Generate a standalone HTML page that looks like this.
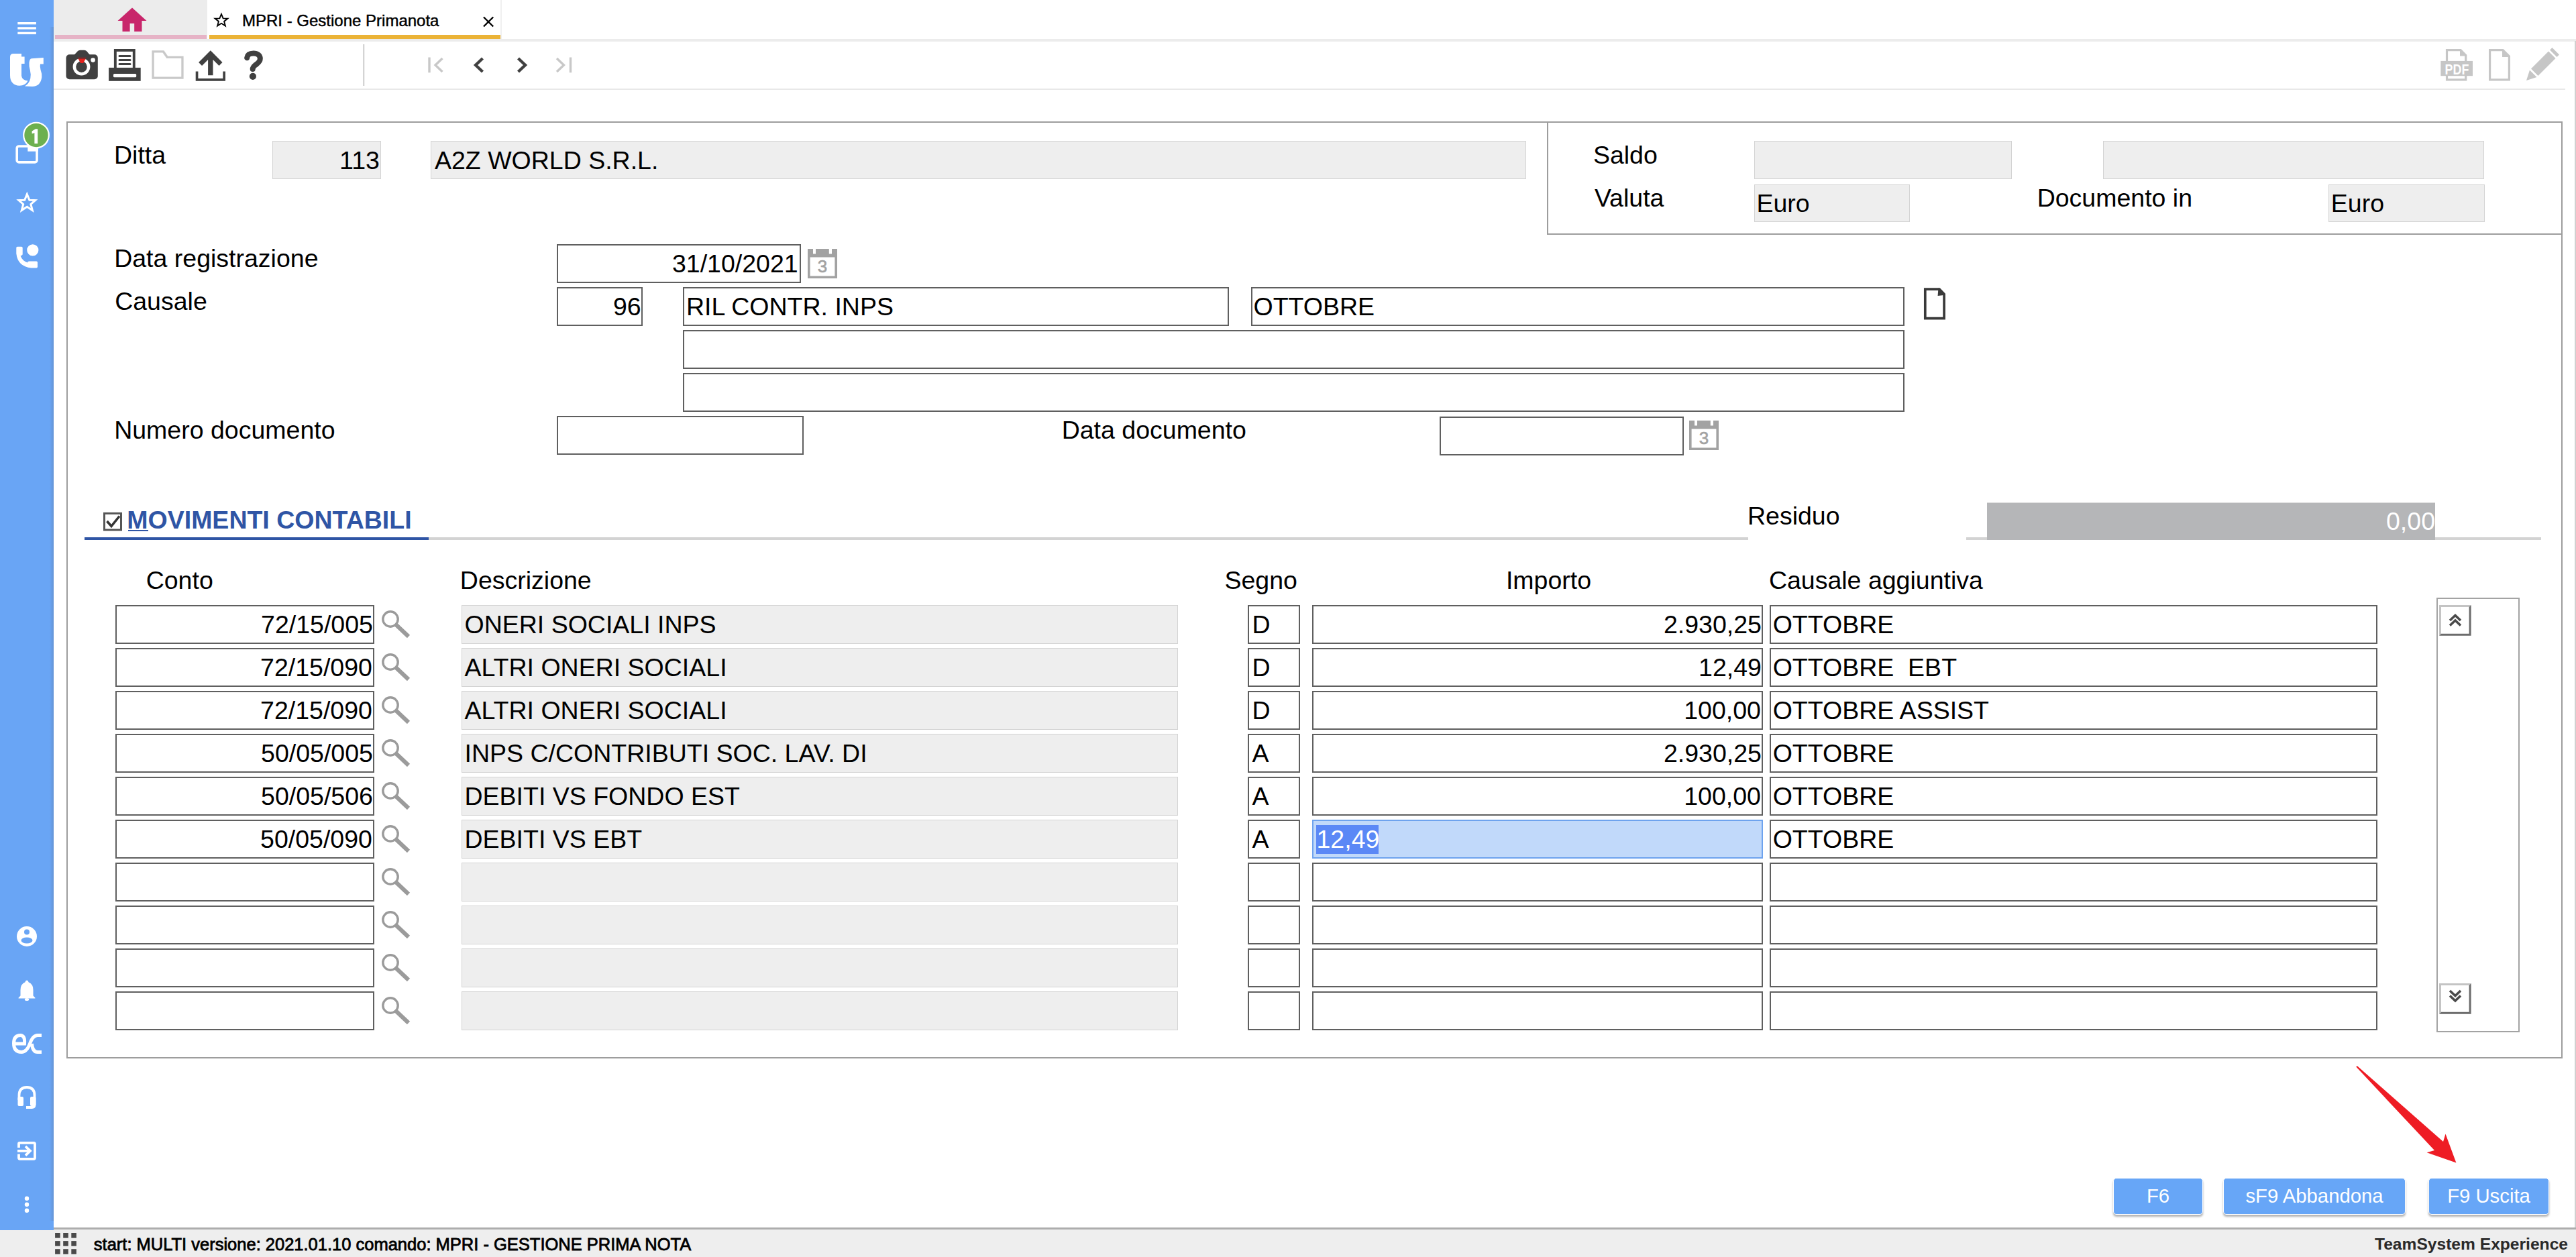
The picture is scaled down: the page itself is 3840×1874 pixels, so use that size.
<!DOCTYPE html><html><head><meta charset="utf-8"><style>
*{margin:0;padding:0;box-sizing:border-box}
html,body{width:3840px;height:1874px;overflow:hidden;background:#fff}
body{position:relative;font-family:"Liberation Sans",sans-serif;color:#000}
div,svg{position:absolute}
.t{font-size:37.5px;line-height:40px;white-space:pre}
.fd{border:2px solid #5f5f5f;background:#fff}
.fg{border:1.6px solid #d3d3d3;background:#eeeeee}
.sb{background:#69a5f5}
.btn{background:#67a6f7;border-radius:5px;border:1px solid #fff;box-shadow:0 3px 3px rgba(0,0,0,.3);color:#fff;font-size:29.3px;line-height:40px;text-align:center}
</style></head><body><div class="sb" style="left:0;top:0;width:80px;height:1834px"></div>
<div style="left:73.5px;top:40px;width:6.5px;height:1794px;background:linear-gradient(to right,rgba(70,90,120,0),rgba(90,110,140,.3))"></div>
<svg style="left:0;top:0" width="80" height="1834" viewBox="0 0 80 1834"><rect x="26.3" y="33" width="27.6" height="3.4" fill="#fff"/><rect x="26.3" y="40.3" width="27.6" height="3.4" fill="#fff"/><rect x="26.3" y="47.7" width="27.6" height="3.4" fill="#fff"/><path fill="#fff" d="M15,85 Q15,80 20,80 L32,80 L32,84.5 L36.6,84.5 L36.6,95 L32,95 L32,113 Q33,120 41.5,120.5 Q38,127.5 29,127.8 Q15,127 15,112 Z"/><path fill="#fff" d="M47,87.2 L64.8,86 L64.8,95.5 L60,95.5 Q59.2,99 60.5,104 Q62.8,110 62.3,115 Q60.5,128.8 48,129 L37,128.6 Q43.5,124.5 45.3,117 Q46.5,111 44.8,104.5 Q43,98 43.5,93.5 Q44,87.8 47,87.2 Z"/><rect x="25.2" y="218" width="29.8" height="23.9" rx="3" fill="none" stroke="#fff" stroke-width="3.6"/><rect x="41.3" y="216.2" width="15.5" height="9.5" fill="#fff"/><circle cx="54" cy="201.6" r="18.8" fill="#6db04f" stroke="#fff" stroke-width="2.2"/><path fill="#fff" d="M47.6,195.5 L53,192.2 L56.2,192.2 L56.2,214 L51.4,214 L51.4,198.2 L47.6,199.2 Z"/><path fill="none" stroke="#fff" stroke-width="3" stroke-linejoin="miter" d="M40.3,289.5 L43.9,298.2 L52.6,298.5 L45.9,304.5 L48.3,313.5 L40.3,308.3 L32.3,313.5 L34.7,304.5 L28,298.5 L36.7,298.2 Z"/><circle cx="48.8" cy="372.9" r="8.6" fill="#fff"/><path fill="#fff" d="M24.3,369.3 Q24.3,367.7 26,367.7 L32,367.7 Q33.7,367.7 33.7,369.4 L33.7,379 Q33.7,380.3 32.3,380.8 L30.6,381.4 Q33.3,388.8 41,391.4 L41.6,389.9 Q42,389.5 43.6,389.5 L54.3,389.5 Q56,389.5 56,391.2 L56,397.8 Q56,399.4 54.3,399.4 L46.5,399.4 Q26.5,397.5 24.3,378 Z"/><circle cx="40" cy="1396" r="15" fill="#fff"/><circle cx="40" cy="1389.6" r="4" fill="#69a5f5"/><ellipse cx="40" cy="1402" rx="8.5" ry="4.6" fill="#69a5f5"/><path fill="#fff" d="M40,1461.5 Q42.3,1461.8 42.5,1464.2 Q49.5,1467 49.5,1476 L49.5,1484.5 L52.4,1487.5 L52.4,1488.6 L27.6,1488.6 L27.6,1487.5 L30.5,1484.5 L30.5,1476 Q30.5,1467 37.5,1464.2 Q37.7,1461.8 40,1461.5 Z"/><ellipse cx="40" cy="1490" rx="3.2" ry="2" fill="#fff"/><path fill="none" stroke="#fff" stroke-width="5" stroke-linecap="butt" d="M23,1556 L36.5,1556 Q37.5,1543.5 30.5,1543.5 Q20.5,1543.5 20.5,1555.5 Q20.5,1568.5 32,1568.5 Q40,1568.5 44.5,1556 Q49,1543.5 56,1543.5 L62,1543.5 M62,1568.5 L56,1568.5 Q48.5,1568.5 47.5,1556"/><path fill="none" stroke="#fff" stroke-width="3.8" d="M28.5,1640 L28.5,1633 Q28.5,1621 40,1621 Q51.5,1621 51.5,1633 L51.5,1647 Q51.5,1651 47.5,1651 L39,1651"/><rect x="26.5" y="1635" width="8.5" height="14" rx="2" fill="#fff"/><rect x="45" y="1635" width="8.5" height="14" rx="2" fill="#fff"/><path fill="none" stroke="#fff" stroke-width="3.8" d="M28,1711 L28,1705 Q28,1703.8 29.5,1703.8 L50.3,1703.8 Q52,1703.8 52,1705.5 L52,1726 Q52,1727.8 50.3,1727.8 L29.5,1727.8 Q28,1727.8 28,1726 L28,1720.5"/><path fill="none" stroke="#fff" stroke-width="3.8" d="M26,1715.8 L45,1715.8 M38,1709 L45,1715.8 L38,1722.6"/><circle cx="40" cy="1786.8" r="3.2" fill="#fff"/><circle cx="40" cy="1795.8" r="3.2" fill="#fff"/><circle cx="40" cy="1804.8" r="3.2" fill="#fff"/></svg>
<div style="left:80px;top:58px;width:3760px;height:3.5px;background:#ececec"></div>
<div style="left:80px;top:0;width:229px;height:58px;background:#ececec"></div>
<div style="left:82px;top:52px;width:226px;height:6px;background:#e6b3c6"></div>
<div style="left:312px;top:52px;width:434px;height:6px;background:#ebb337"></div>
<div style="left:746px;top:0;width:2px;height:58px;background:#f0f0f0"></div>
<svg style="left:0;top:0" width="800" height="60" viewBox="0 0 800 60"><path fill="#c8266b" d="M197,11.5 L218.5,31 L211.5,31 L211.5,47 L200.2,47 L200.2,35 L193.6,35 L193.6,47 L182.5,47 L182.5,31 L175.5,31 Z"/><path fill="none" stroke="#000" stroke-width="1.9" stroke-linejoin="miter" d="M330,21 L332.6,27.4 L339.4,27.6 L334.1,31.9 L335.9,38.6 L330,34.8 L324.1,38.6 L325.9,31.9 L320.6,27.6 L327.4,27.4 Z"/><path fill="none" stroke="#000" stroke-width="2.4" d="M721,25.5 L735.2,39.5 M735.2,25.5 L721,39.5"/></svg>
<div style="left:361px;top:15.5px;font-size:24px;line-height:30px;white-space:pre;-webkit-text-stroke:0.45px #000">MPRI - Gestione Primanota</div>
<div style="left:80px;top:132px;width:3744px;height:2px;background:#e8e8e8"></div>
<div style="left:3838px;top:61px;width:2px;height:1769px;background:#d0d0d0"></div>
<div style="left:541.5px;top:66px;width:1.6px;height:62px;background:#8a8a8a"></div>
<svg style="left:0;top:60px" width="900" height="72" viewBox="0 60 900 72"><rect x="98.5" y="81.3" width="47.3" height="37" rx="5" fill="#404040"/><path fill="#404040" d="M110.5,82 L115.8,76.3 Q117,74.8 119.5,74.8 L125.5,74.8 Q128,74.8 129.2,76.3 L134,82 Z"/><circle cx="121.5" cy="99.6" r="10.6" fill="none" stroke="#fff" stroke-width="4.6"/><circle cx="138.6" cy="89.6" r="3.3" fill="#fff"/><path fill="#8a2a2a" d="M116,85.7 L128.3,85.7 L127.5,88.2 L116.8,88.2 Z"/><path fill="#e3231e" d="M116.8,88 L127.5,88 L124.2,94 L120,94 Z"/><rect x="171.85" y="74.95" width="27.9" height="30" fill="none" stroke="#404040" stroke-width="3.9"/><path stroke="#404040" stroke-width="3" stroke-linecap="round" d="M178,83.4 L194,83.4 M178,89.6 L194,89.6 M178,95.5 L194,95.5"/><rect x="162.1" y="100.9" width="47.6" height="19.9" fill="#404040"/><rect x="169" y="110" width="34.2" height="5.2" rx="1.5" fill="#fff"/><path fill="none" stroke="#c9c9c9" stroke-width="3.3" d="M228.05,76.95 L243.5,76.95 L249.2,85.3 L271.95,85.3 L271.95,116.05 L228.05,116.05 Z"/><path fill="#404040" d="M313.8,75.3 L331.5,93 L326.55,97.95 L317.5,88.9 L317.5,112.2 L310.1,112.2 L310.1,88.9 L301.05,97.95 L296.1,93 Z"/><path fill="none" stroke="#404040" stroke-width="3.7" d="M293.55,106.5 L293.55,118.85 L334.15,118.85 L334.15,106.5"/><path fill="none" stroke="#404040" stroke-width="8" stroke-linecap="round" d="M368.2,86.2 C369,80.8 372.8,79.6 377.8,79.6 C384,79.6 387.8,82.6 387.8,87.5 C387.8,92.6 383.3,94.8 380.3,97.3 C377.6,99.5 376.7,101.3 376.7,103"/><circle cx="376.9" cy="113.8" r="5.1" fill="#404040"/><path fill="none" stroke="#c8c8c8" stroke-width="3.4" d="M640,85.6 L640,108.3 M659.5,87 L649,97 L659.5,107"/><path fill="none" stroke="#404040" stroke-width="4.4" d="M719.5,87 L709,97 L719.5,107"/><path fill="none" stroke="#404040" stroke-width="4.4" d="M772.5,87 L783,97 L772.5,107"/><path fill="none" stroke="#c8c8c8" stroke-width="3.4" d="M830,87 L840.5,97 L830,107 M850.5,85.6 L850.5,108.3"/></svg>
<svg style="left:3600px;top:60px" width="240" height="72" viewBox="3600 60 240 72"><path fill="none" stroke="#c6c6c6" stroke-width="3.2" d="M3647.5,92 L3647.5,74.7 L3668,74.7 L3675.7,82.5 L3675.7,92 M3647.5,112 L3647.5,118.8 L3675.7,118.8 L3675.7,112"/><path fill="#c6c6c6" d="M3667,73.1 L3677.3,83.5 L3667,83.5 Z"/><rect x="3638.3" y="90.9" width="47.7" height="22.3" fill="#c6c6c6"/><text x="3644.6" y="110.6" font-family="Liberation Sans" font-weight="700" font-size="21.5" fill="#fff" textLength="35.7" lengthAdjust="spacingAndGlyphs">PDF</text><path fill="none" stroke="#c6c6c6" stroke-width="3.2" d="M3711.6,74.7 L3731,74.7 L3740.4,84 L3740.4,118.8 L3711.6,118.8 Z"/><path fill="#c6c6c6" d="M3730,73.1 L3742,85 L3730,85 Z"/><path fill="#c6c6c6" d="M3766,120 L3771,104.5 L3781.5,115 Z M3773,102.5 L3799,76.5 L3809.5,87 L3783.5,113 Z M3801,74.5 L3804.5,71 L3815,81.5 L3811.5,85 Z"/></svg>
<div style="left:98.5px;top:180.5px;width:3721.5px;height:1397.5px;border:2px solid #9d9d9d"></div>
<div style="left:2306px;top:180.5px;width:2px;height:169px;background:#9d9d9d"></div>
<div style="left:2306px;top:347.5px;width:1514px;height:2px;background:#9d9d9d"></div>
<div class="fg" style="left:405.5px;top:210.3px;width:162.1px;height:57.2px;"></div>
<div class="fg" style="left:642.2px;top:210.3px;width:1632.5px;height:57.2px;"></div>
<div class="fg" style="left:2614.5px;top:210.3px;width:384.5px;height:57.2px;"></div>
<div class="fg" style="left:3134.6px;top:210.3px;width:568.9px;height:57.2px;"></div>
<div class="fg" style="left:2614.5px;top:274.5px;width:232.3px;height:56.5px;"></div>
<div class="fg" style="left:3470.5px;top:274.5px;width:233px;height:56.5px;"></div>
<div class="t" style="left:170px;top:211px">Ditta</div>
<div class="t" style="right:3274.1px;top:219px">113</div>
<div class="t" style="left:648px;top:219.4px">A2Z WORLD S.R.L.</div>
<div class="t" style="left:2374.9px;top:210.6px">Saldo</div>
<div class="t" style="left:2376.9px;top:274.8px">Valuta</div>
<div class="t" style="left:3036.7px;top:275.4px">Documento in</div>
<div class="t" style="left:2618.5px;top:283px">Euro</div>
<div class="t" style="left:3474.8px;top:283px">Euro</div>
<div class="fd" style="left:830px;top:364px;width:364px;height:58px;"></div>
<div class="fd" style="left:830px;top:428px;width:128px;height:58px;"></div>
<div class="fd" style="left:1018px;top:428px;width:813.6px;height:58px;"></div>
<div class="fd" style="left:1864.7px;top:428px;width:974.6px;height:58px;"></div>
<div class="fd" style="left:1018px;top:492px;width:1821.3px;height:58px;"></div>
<div class="fd" style="left:1018px;top:556px;width:1821.3px;height:58px;"></div>
<div class="fd" style="left:830px;top:620px;width:368px;height:58px;"></div>
<div class="fd" style="left:2146px;top:620.5px;width:364px;height:58px;"></div>
<div class="t" style="left:170.2px;top:365.2px">Data registrazione</div>
<div class="t" style="left:171.2px;top:428.8px">Causale</div>
<div class="t" style="left:170.2px;top:621px">Numero documento</div>
<div class="t" style="left:1582.7px;top:621.2px">Data documento</div>
<div class="t" style="right:2650.4px;top:372.5px">31/10/2021</div>
<div class="t" style="right:2884.4px;top:436.5px">96</div>
<div class="t" style="left:1022.9px;top:436.5px">RIL CONTR. INPS</div>
<div class="t" style="left:1868.5px;top:436.5px">OTTOBRE</div>
<svg style="left:1204px;top:371px" width="44" height="44" viewBox="0 0 44 44"><path fill="#a2a2a2" d="M0,0 L8,0 L8,7.5 L12,7.5 L12,0 L31.8,0 L31.8,7.5 L36,7.5 L36,0 L44,0 L44,44 L0,44 Z M3.6,12.5 L3.6,40.4 L40.4,40.4 L40.4,12.5 Z"/><text x="22" y="34.8" text-anchor="middle" font-family="Liberation Sans" font-weight="400" font-size="26" fill="#a2a2a2" stroke="#a2a2a2" stroke-width="0.6">3</text></svg>
<svg style="left:2518px;top:627.4px" width="44" height="44" viewBox="0 0 44 44"><path fill="#a2a2a2" d="M0,0 L8,0 L8,7.5 L12,7.5 L12,0 L31.8,0 L31.8,7.5 L36,7.5 L36,0 L44,0 L44,44 L0,44 Z M3.6,12.5 L3.6,40.4 L40.4,40.4 L40.4,12.5 Z"/><text x="22" y="34.8" text-anchor="middle" font-family="Liberation Sans" font-weight="400" font-size="26" fill="#a2a2a2" stroke="#a2a2a2" stroke-width="0.6">3</text></svg>
<svg style="left:2860px;top:425px" width="48" height="56" viewBox="2860 425 48 56"><path fill="none" stroke="#3a3a3a" stroke-width="3.7" d="M2869.8,431.2 L2891,431.2 L2898.1,438.5 L2898.1,474.7 L2869.8,474.7 Z"/><path fill="#3a3a3a" d="M2889.5,429.3 L2900,439.8 L2888.6,441 Z"/></svg>
<svg style="left:150px;top:760px" width="40" height="36" viewBox="150 760 40 36"><rect x="155.5" y="765.4" width="25" height="24.6" fill="#fff" stroke="#555" stroke-width="3"/><path fill="none" stroke="#333" stroke-width="3.6" d="M159.5,777 L166,784.5 L178,769.5"/></svg>
<div class="t" style="left:189.3px;top:755.4px;font-weight:700;color:#2f55a5">MOVIMENTI CONTABILI</div>
<div style="left:191px;top:790px;width:30px;height:2.4px;background:#2f55a5"></div>
<div style="left:126px;top:801px;width:513px;height:4px;background:#2f55a5"></div>
<div style="left:639px;top:801.3px;width:1967px;height:3.4px;background:#d3d3d3"></div>
<div style="left:2931px;top:801.3px;width:857px;height:3.4px;background:#d3d3d3"></div>
<div class="t" style="left:2605px;top:749.2px">Residuo</div>
<div style="left:2961.5px;top:748.6px;width:668.5px;height:56.6px;background:#b5b6b8;border-top:1.6px solid #d8d8d8;overflow:hidden"><div class="t" style="left:595.5px;top:7.8px;color:#fff">0,00</div></div>
<div class="t" style="left:217.7px;top:844.8px">Conto</div>
<div class="t" style="left:685.8px;top:844.8px">Descrizione</div>
<div class="t" style="left:1825.5px;top:844.8px">Segno</div>
<div class="t" style="left:2244.9px;top:844.8px">Importo</div>
<div class="t" style="left:2636.9px;top:844.8px">Causale aggiuntiva</div>
<div class="fd" style="left:172px;top:902px;width:386px;height:58px;"></div>
<svg style="left:568px;top:908.6px" width="50" height="50" viewBox="0 0 50 50"><circle cx="14" cy="14" r="11.2" fill="none" stroke="#9b9b9b" stroke-width="3.4"/><path stroke="#9b9b9b" stroke-width="6.2" stroke-linecap="butt" d="M22.5,22.5 L41,40"/></svg>
<div class="fg" style="left:688px;top:902px;width:1068px;height:58px;"></div>
<div class="fd" style="left:1860px;top:902px;width:78px;height:58px;"></div>
<div class="fd" style="left:1956px;top:902px;width:671.5px;height:58px;"></div>
<div class="fd" style="left:2638px;top:902px;width:905.6px;height:58px;"></div>
<div class="t" style="right:3284.1px;top:911px">72/15/005</div>
<div class="t" style="left:692.5px;top:911px">ONERI SOCIALI INPS</div>
<div class="t" style="left:1866.5px;top:911px">D</div>
<div class="t" style="right:1214.1px;top:911px">2.930,25</div>
<div class="t" style="left:2642.7px;top:911px">OTTOBRE</div>
<div class="fd" style="left:172px;top:966px;width:386px;height:58px;"></div>
<svg style="left:568px;top:972.6px" width="50" height="50" viewBox="0 0 50 50"><circle cx="14" cy="14" r="11.2" fill="none" stroke="#9b9b9b" stroke-width="3.4"/><path stroke="#9b9b9b" stroke-width="6.2" stroke-linecap="butt" d="M22.5,22.5 L41,40"/></svg>
<div class="fg" style="left:688px;top:966px;width:1068px;height:58px;"></div>
<div class="fd" style="left:1860px;top:966px;width:78px;height:58px;"></div>
<div class="fd" style="left:1956px;top:966px;width:671.5px;height:58px;"></div>
<div class="fd" style="left:2638px;top:966px;width:905.6px;height:58px;"></div>
<div class="t" style="right:3285.1px;top:975px">72/15/090</div>
<div class="t" style="left:692.5px;top:975px">ALTRI ONERI SOCIALI</div>
<div class="t" style="left:1866.5px;top:975px">D</div>
<div class="t" style="right:1214.1px;top:975px">12,49</div>
<div class="t" style="left:2642.7px;top:975px">OTTOBRE  EBT</div>
<div class="fd" style="left:172px;top:1030px;width:386px;height:58px;"></div>
<svg style="left:568px;top:1036.6px" width="50" height="50" viewBox="0 0 50 50"><circle cx="14" cy="14" r="11.2" fill="none" stroke="#9b9b9b" stroke-width="3.4"/><path stroke="#9b9b9b" stroke-width="6.2" stroke-linecap="butt" d="M22.5,22.5 L41,40"/></svg>
<div class="fg" style="left:688px;top:1030px;width:1068px;height:58px;"></div>
<div class="fd" style="left:1860px;top:1030px;width:78px;height:58px;"></div>
<div class="fd" style="left:1956px;top:1030px;width:671.5px;height:58px;"></div>
<div class="fd" style="left:2638px;top:1030px;width:905.6px;height:58px;"></div>
<div class="t" style="right:3285.1px;top:1039px">72/15/090</div>
<div class="t" style="left:692.5px;top:1039px">ALTRI ONERI SOCIALI</div>
<div class="t" style="left:1866.5px;top:1039px">D</div>
<div class="t" style="right:1215.1px;top:1039px">100,00</div>
<div class="t" style="left:2642.7px;top:1039px">OTTOBRE ASSIST</div>
<div class="fd" style="left:172px;top:1094px;width:386px;height:58px;"></div>
<svg style="left:568px;top:1100.6px" width="50" height="50" viewBox="0 0 50 50"><circle cx="14" cy="14" r="11.2" fill="none" stroke="#9b9b9b" stroke-width="3.4"/><path stroke="#9b9b9b" stroke-width="6.2" stroke-linecap="butt" d="M22.5,22.5 L41,40"/></svg>
<div class="fg" style="left:688px;top:1094px;width:1068px;height:58px;"></div>
<div class="fd" style="left:1860px;top:1094px;width:78px;height:58px;"></div>
<div class="fd" style="left:1956px;top:1094px;width:671.5px;height:58px;"></div>
<div class="fd" style="left:2638px;top:1094px;width:905.6px;height:58px;"></div>
<div class="t" style="right:3284.1px;top:1103px">50/05/005</div>
<div class="t" style="left:692.5px;top:1103px">INPS C/CONTRIBUTI SOC. LAV. DI</div>
<div class="t" style="left:1866.5px;top:1103px">A</div>
<div class="t" style="right:1214.1px;top:1103px">2.930,25</div>
<div class="t" style="left:2642.7px;top:1103px">OTTOBRE</div>
<div class="fd" style="left:172px;top:1158px;width:386px;height:58px;"></div>
<svg style="left:568px;top:1164.6px" width="50" height="50" viewBox="0 0 50 50"><circle cx="14" cy="14" r="11.2" fill="none" stroke="#9b9b9b" stroke-width="3.4"/><path stroke="#9b9b9b" stroke-width="6.2" stroke-linecap="butt" d="M22.5,22.5 L41,40"/></svg>
<div class="fg" style="left:688px;top:1158px;width:1068px;height:58px;"></div>
<div class="fd" style="left:1860px;top:1158px;width:78px;height:58px;"></div>
<div class="fd" style="left:1956px;top:1158px;width:671.5px;height:58px;"></div>
<div class="fd" style="left:2638px;top:1158px;width:905.6px;height:58px;"></div>
<div class="t" style="right:3284.1px;top:1167px">50/05/506</div>
<div class="t" style="left:692.5px;top:1167px">DEBITI VS FONDO EST</div>
<div class="t" style="left:1866.5px;top:1167px">A</div>
<div class="t" style="right:1215.1px;top:1167px">100,00</div>
<div class="t" style="left:2642.7px;top:1167px">OTTOBRE</div>
<div class="fd" style="left:172px;top:1222px;width:386px;height:58px;"></div>
<svg style="left:568px;top:1228.6px" width="50" height="50" viewBox="0 0 50 50"><circle cx="14" cy="14" r="11.2" fill="none" stroke="#9b9b9b" stroke-width="3.4"/><path stroke="#9b9b9b" stroke-width="6.2" stroke-linecap="butt" d="M22.5,22.5 L41,40"/></svg>
<div class="fg" style="left:688px;top:1222px;width:1068px;height:58px;"></div>
<div class="fd" style="left:1860px;top:1222px;width:78px;height:58px;"></div>
<div style="left:1956px;top:1222px;width:671.5px;height:58px;background:#c1d9fa;border:2px solid #6ea3ee"></div>
<div style="left:1962px;top:1230px;width:93px;height:43px;background:#5b88f6"></div>
<div class="fd" style="left:2638px;top:1222px;width:905.6px;height:58px;"></div>
<div class="t" style="right:3285.1px;top:1231px">50/05/090</div>
<div class="t" style="left:692.5px;top:1231px">DEBITI VS EBT</div>
<div class="t" style="left:1866.5px;top:1231px">A</div>
<div class="t" style="left:1962.5px;top:1231px;color:#fff">12,49</div>
<div class="t" style="left:2642.7px;top:1231px">OTTOBRE</div>
<div class="fd" style="left:172px;top:1286px;width:386px;height:58px;"></div>
<svg style="left:568px;top:1292.6px" width="50" height="50" viewBox="0 0 50 50"><circle cx="14" cy="14" r="11.2" fill="none" stroke="#9b9b9b" stroke-width="3.4"/><path stroke="#9b9b9b" stroke-width="6.2" stroke-linecap="butt" d="M22.5,22.5 L41,40"/></svg>
<div class="fg" style="left:688px;top:1286px;width:1068px;height:58px;"></div>
<div class="fd" style="left:1860px;top:1286px;width:78px;height:58px;"></div>
<div class="fd" style="left:1956px;top:1286px;width:671.5px;height:58px;"></div>
<div class="fd" style="left:2638px;top:1286px;width:905.6px;height:58px;"></div>
<div class="fd" style="left:172px;top:1350px;width:386px;height:58px;"></div>
<svg style="left:568px;top:1356.6px" width="50" height="50" viewBox="0 0 50 50"><circle cx="14" cy="14" r="11.2" fill="none" stroke="#9b9b9b" stroke-width="3.4"/><path stroke="#9b9b9b" stroke-width="6.2" stroke-linecap="butt" d="M22.5,22.5 L41,40"/></svg>
<div class="fg" style="left:688px;top:1350px;width:1068px;height:58px;"></div>
<div class="fd" style="left:1860px;top:1350px;width:78px;height:58px;"></div>
<div class="fd" style="left:1956px;top:1350px;width:671.5px;height:58px;"></div>
<div class="fd" style="left:2638px;top:1350px;width:905.6px;height:58px;"></div>
<div class="fd" style="left:172px;top:1414px;width:386px;height:58px;"></div>
<svg style="left:568px;top:1420.6px" width="50" height="50" viewBox="0 0 50 50"><circle cx="14" cy="14" r="11.2" fill="none" stroke="#9b9b9b" stroke-width="3.4"/><path stroke="#9b9b9b" stroke-width="6.2" stroke-linecap="butt" d="M22.5,22.5 L41,40"/></svg>
<div class="fg" style="left:688px;top:1414px;width:1068px;height:58px;"></div>
<div class="fd" style="left:1860px;top:1414px;width:78px;height:58px;"></div>
<div class="fd" style="left:1956px;top:1414px;width:671.5px;height:58px;"></div>
<div class="fd" style="left:2638px;top:1414px;width:905.6px;height:58px;"></div>
<div class="fd" style="left:172px;top:1478px;width:386px;height:58px;"></div>
<svg style="left:568px;top:1484.6px" width="50" height="50" viewBox="0 0 50 50"><circle cx="14" cy="14" r="11.2" fill="none" stroke="#9b9b9b" stroke-width="3.4"/><path stroke="#9b9b9b" stroke-width="6.2" stroke-linecap="butt" d="M22.5,22.5 L41,40"/></svg>
<div class="fg" style="left:688px;top:1478px;width:1068px;height:58px;"></div>
<div class="fd" style="left:1860px;top:1478px;width:78px;height:58px;"></div>
<div class="fd" style="left:1956px;top:1478px;width:671.5px;height:58px;"></div>
<div class="fd" style="left:2638px;top:1478px;width:905.6px;height:58px;"></div>
<div style="left:3632px;top:890.5px;width:123.5px;height:648.5px;border:2px solid #a3a3a3"></div>
<svg style="left:3630px;top:896px" width="60" height="60" viewBox="3630 896 60 60"><path fill="#c4c4c4" d="M3636,902 L3683.6,902 L3680.6,905 L3639,905 L3639,944.7 L3636,947.7 Z"/><path fill="#6c6c6c" d="M3683.6,902 L3683.6,947.7 L3636,947.7 L3639,944.7 L3680.6,944.7 L3680.6,905 Z"/><path fill="none" stroke="#4a4a4a" stroke-width="3.6" d="M3652,925 L3660,917.5 L3668,925 M3652,932.5 L3660,925 L3668,932.5"/></svg>
<svg style="left:3630px;top:1460px" width="60" height="60" viewBox="3630 1460 60 60"><path fill="#c4c4c4" d="M3636,1466 L3683.6,1466 L3680.6,1469 L3639,1469 L3639,1508.7 L3636,1511.7 Z"/><path fill="#6c6c6c" d="M3683.6,1466 L3683.6,1511.7 L3636,1511.7 L3639,1508.7 L3680.6,1508.7 L3680.6,1469 Z"/><path fill="none" stroke="#4a4a4a" stroke-width="3.6" d="M3652,1477 L3660,1484.5 L3668,1477 M3652,1484.5 L3660,1492 L3668,1484.5"/></svg>
<div class="btn" style="left:3150px;top:1756px;width:134px;height:54.5px;padding-top:5.8px">F6</div>
<div class="btn" style="left:3314px;top:1756px;width:272px;height:54.5px;padding-top:5.8px">sF9 Abbandona</div>
<div class="btn" style="left:3620px;top:1756px;width:180px;height:54.5px;padding-top:5.8px">F9 Uscita</div>
<svg style="left:3500px;top:1580px" width="180" height="170" viewBox="3500 1580 180 170"><path fill="#ee1c24" d="M3513.7,1589 L3642,1702 L3645.5,1690.5 L3661.4,1733.4 L3617.6,1718.3 L3629,1715 L3512.3,1590.6 Z"/></svg>
<div style="left:0;top:1830px;width:3840px;height:44px;background:#eeeeee;border-top:3.7px solid #adadad"></div>
<div class="sb" style="left:0;top:1820px;width:80px;height:14px"></div>
<svg style="left:80px;top:1834px" width="40" height="40" viewBox="80 1834 40 40"><rect x="82.1" y="1838.0" width="7.6" height="7.6" fill="#4a4a4a"/><rect x="94.2" y="1838.0" width="7.6" height="7.6" fill="#4a4a4a"/><rect x="106.3" y="1838.0" width="7.6" height="7.6" fill="#4a4a4a"/><rect x="82.1" y="1850.1" width="7.6" height="7.6" fill="#4a4a4a"/><rect x="94.2" y="1850.1" width="7.6" height="7.6" fill="#4a4a4a"/><rect x="106.3" y="1850.1" width="7.6" height="7.6" fill="#4a4a4a"/><rect x="82.1" y="1862.2" width="7.6" height="7.6" fill="#4a4a4a"/><rect x="94.2" y="1862.2" width="7.6" height="7.6" fill="#4a4a4a"/><rect x="106.3" y="1862.2" width="7.6" height="7.6" fill="#4a4a4a"/></svg>
<div style="left:139.8px;top:1840px;font-size:25.5px;line-height:30px;white-space:pre;-webkit-text-stroke:0.8px #000">start: MULTI versione: 2021.01.10 comando: MPRI - GESTIONE PRIMA NOTA</div>
<div style="right:12px;top:1839.9px;font-size:24.6px;line-height:30px;font-weight:700;white-space:pre;color:#2a2a2a">TeamSystem Experience</div></body></html>
